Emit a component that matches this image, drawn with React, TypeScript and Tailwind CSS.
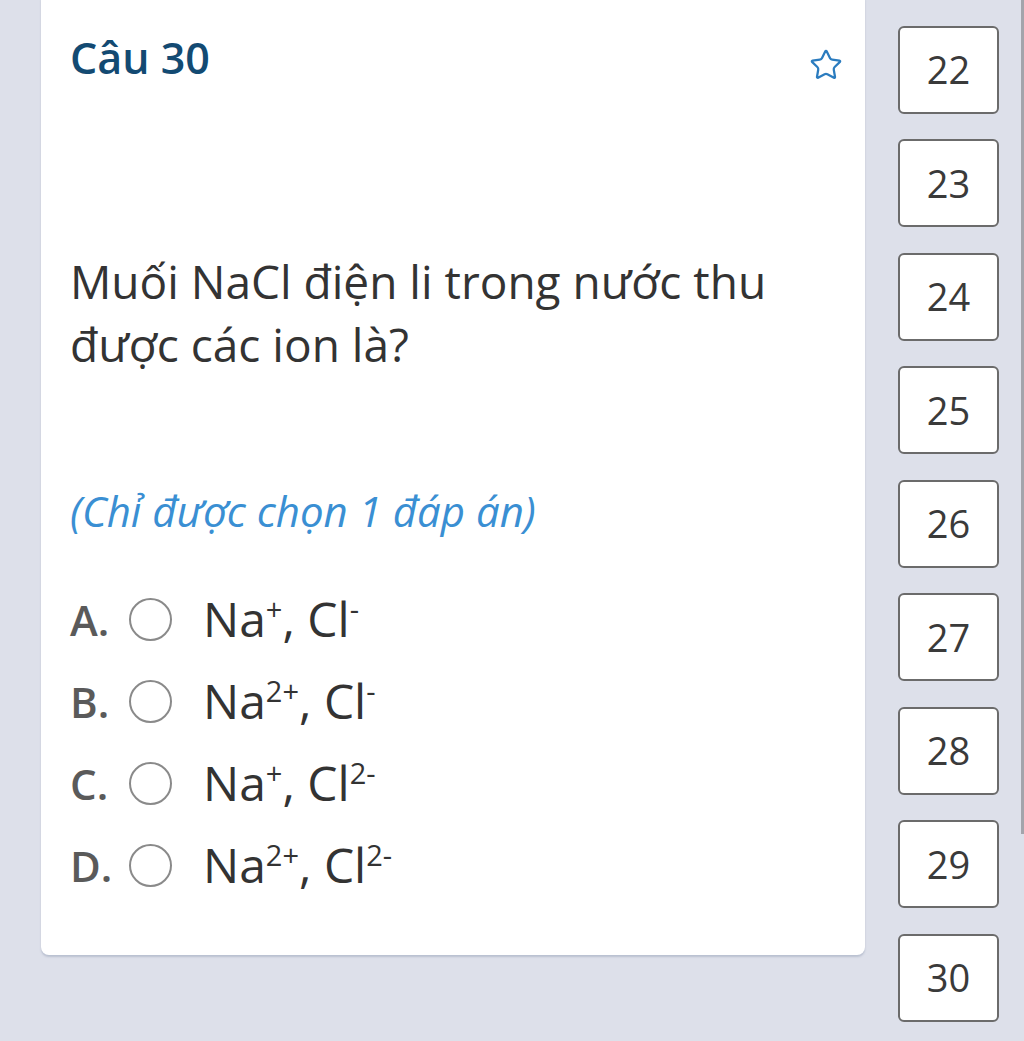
import { Star } from "lucide-react";

const options = [
  { key: "A", na: "+", cl: "-" },
  { key: "B", na: "2+", cl: "-" },
  { key: "C", na: "+", cl: "2-" },
  { key: "D", na: "2+", cl: "2-" },
];

const numbers = [22, 23, 24, 25, 26, 27, 28, 29, 30];

const Sup = ({ children }: { children: string }) => (
  <span className="relative -top-[17px] text-[29px] leading-none">{children}</span>
);

export default function App() {
  return (
    <div
      className="relative h-[1041px] w-[1024px] overflow-hidden bg-[#dde0ea]"
      style={{ fontFamily: '"Open Sans", "Noto Sans", sans-serif' }}
    >
      <div className="flex items-start pl-[41px]">
        {/* question card */}
        <div className="-mt-[8px] flex h-[963px] w-[824px] flex-col rounded-lg bg-white pl-[29px] pr-[30px] shadow-[0_2px_2px_rgba(120,135,160,0.35)]">
          <div className="flex items-start justify-between pt-[36px]">
            <h2 className="text-[43px] font-semibold leading-[60px] text-[#134a72]">Câu 30</h2>
            <Star className="-mr-[8px] mt-[20px] h-[34px] w-[34px] text-[#2b7cbf]" strokeWidth={1.6} />
          </div>

          <p className="mt-[162px] text-[46px] leading-[63px] text-[#333333]">
            Muối NaCl điện li trong nước thu được các ion là?
          </p>

          <p className="mt-[107px] text-[42px] italic leading-[56px] text-[#3a8fd3]">(Chỉ được chọn 1 đáp án)</p>

          <div className="mt-[50px] flex flex-col gap-[22px]">
            {options.map((o) => (
              <div key={o.key} className="flex h-[60px] items-center">
                <span className="w-[59px] text-[42px] font-semibold text-[#5a5a5a]">{o.key}.</span>
                <span className="h-[43px] w-[43px] rounded-full border-2 border-[#8a8a8a]" />
                <span className="ml-[31px] text-[48px] text-[#333333]">
                  Na<Sup>{o.na}</Sup>, Cl<Sup>{o.cl}</Sup>
                </span>
              </div>
            ))}
          </div>
        </div>

        {/* question number column */}
        <div className="-mt-[88px] ml-[33px] flex w-[101px] flex-col gap-[25.5px]">
          {/* previous box, only its bottom edge is in view */}
          <div className="h-[88px] rounded-md border-2 border-[#6b6b6b] bg-white" />
          {numbers.map((n) => (
            <div
              key={n}
              className="flex h-[88px] items-center justify-center rounded-md border-2 border-[#6b6b6b] bg-white text-[38px] text-[#3a3a3a]"
            >
              {n}
            </div>
          ))}
        </div>
      </div>

      {/* scrollbar thumb */}
      <div className="absolute right-0 top-0 h-[834px] w-[3px] bg-[#a3a4ab]" />
    </div>
  );
}
